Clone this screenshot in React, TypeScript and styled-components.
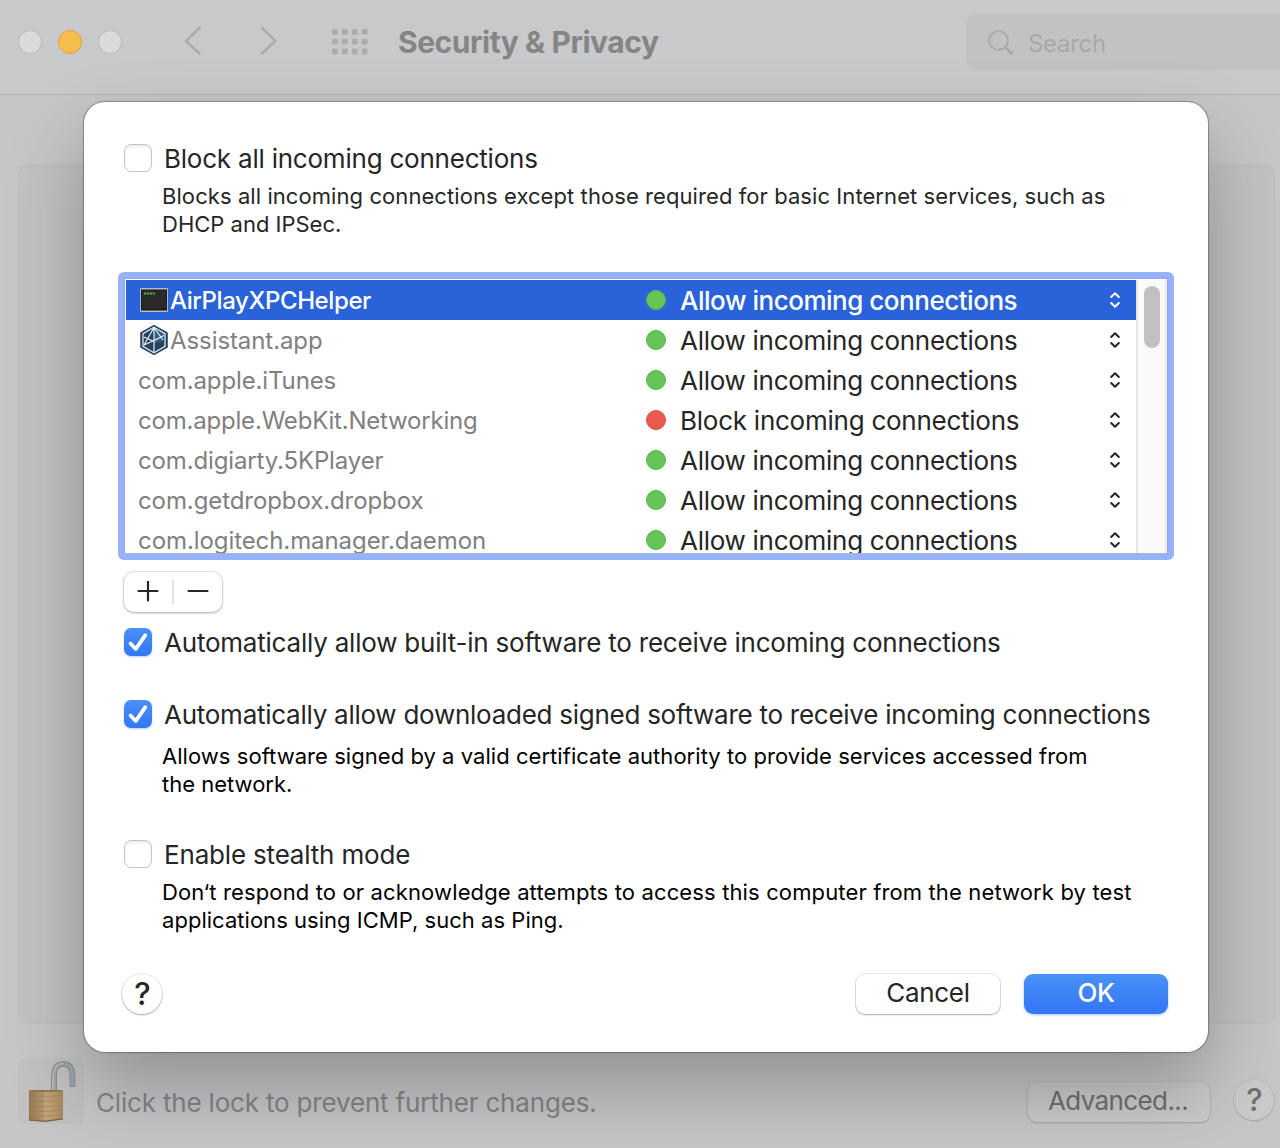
import React, { useState } from 'react';
import styled, { createGlobalStyle, css } from 'styled-components';

const GlobalStyle = createGlobalStyle`
  * { box-sizing: border-box; }
  body {
    margin: 0;
    overflow: hidden;
    font-family: Inter, 'Liberation Sans', sans-serif;
    color: #262626;
  }
  button { font-family: inherit; padding: 0; border: none; }
`;

const Window = styled.div`
  position: relative;
  display: flex;
  flex-direction: column;
  width: 1280px;
  height: 1148px;
  overflow: hidden;
  background: #c6c6c8;
`;

const Toolbar = styled.header`
  display: flex;
  align-items: center;
  height: 95px;
  padding: 0 0 10px 18px;
  background: #c8c9cb;
  border-bottom: 1px solid #b3b4b6;
`;

const Lights = styled.div`
  display: flex;
  gap: 16px;
`;

const Light = styled.span<{ $on?: boolean }>`
  width: 24px;
  height: 24px;
  border-radius: 50%;
  background: ${props => (props.$on ? '#f5bf4f' : '#d9dadc')};
  border: 1px solid ${props => (props.$on ? '#dfa33a' : '#b9babc')};
`;

const NavButtons = styled.div`
  display: flex;
  gap: 54px;
  margin: -2px 0 0 62px;
  color: #abacae;
`;

const GridIcon = styled.svg`
  margin-left: 54px;
  fill: #abacae;
`;

const Title = styled.h1`
  margin: 0 0 1px 30px;
  width: 568px;
  font-size: 30px;
  line-height: 36px;
  font-weight: 700;
  letter-spacing: -0.46px;
  color: #858586;
  white-space: nowrap;
`;

const SearchBox = styled.div`
  display: flex;
  align-items: center;
  flex: 1;
  height: 56px;
  padding-left: 21px;
  gap: 13px;
  border-radius: 10px 0 0 10px;
  background: #c2c2c3;
  color: #a9a9aa;
  font-size: 24px;
  letter-spacing: -0.3px;

  span { padding-top: 2px; }
`;

const Pane = styled.main`
  height: 860px;
  margin: 69px 5px 0 18px;
  border-radius: 10px;
  background: #c0c2c3;
  border: 1px solid #bcbec0;
`;

const StatusBar = styled.footer`
  display: flex;
  align-items: flex-start;
  padding: 34px 6px 0 18px;
`;

const LockTile = styled.div`
  width: 66px;
  height: 66px;
  border-radius: 8px;
  background: rgba(188, 187, 185, 0.5);
`;

const LockText = styled.span`
  flex: 1;
  padding: 29px 0 0 12px;
  font-size: 26px;
  line-height: 32px;
  letter-spacing: -0.18px;
  color: #858587;
`;

const buttonFace = css`
  height: 40px;
  background: #fff;
  box-shadow: 0 0 0 1px rgba(0, 0, 0, 0.08), 0 1px 2px rgba(0, 0, 0, 0.28);
  color: #262626;
`;

const dimmedFace = css`
  background: rgba(205, 205, 205, 0.55);
  box-shadow: 0 0 0 1px rgba(0, 0, 0, 0.05), 0 1px 2px rgba(0, 0, 0, 0.15);
  color: #6f6f70;
`;

const PushButton = styled.button<{ $width: number; $dimmed?: boolean; $primary?: boolean; $track?: number }>`
  ${buttonFace}
  width: ${props => props.$width}px;
  border-radius: 9px;
  font-size: 26px;
  line-height: 38px;
  padding: 0 0 2px;
  letter-spacing: ${props => props.$track || 0}px;
  ${props => props.$dimmed && dimmedFace}
  ${props => props.$dimmed && 'padding-right: 2px;'}
  ${props => props.$primary && css`
    background: linear-gradient(#4a90f8, #3376f5);
    box-shadow: 0 1px 3px rgba(51, 118, 245, 0.4);
    color: #fff;
    font-weight: 500;
  `}
`;

const HelpButton = styled.button<{ $dimmed?: boolean }>`
  ${buttonFace}
  width: 40px;
  border-radius: 50%;
  font-size: 31px;
  line-height: 40px;
  font-weight: 500;
  padding-left: 1px;
  ${props => props.$dimmed && dimmedFace}
`;

const StatusActions = styled.div`
  display: flex;
  align-items: flex-start;
  gap: 24px;
  padding-top: 24px;

  ${HelpButton} { margin-top: -2px; }
`;

// The sheet floats above the dimmed preferences window
const Sheet = styled.section`
  position: absolute;
  top: 102px;
  left: 84px;
  width: 1124px;
  height: 950px;
  padding: 42px 40px 0;
  border-radius: 21px;
  background: #fff;
  box-shadow: 0 0 1px 1px rgba(0, 0, 0, 0.3), 0 36px 76px rgba(0, 0, 0, 0.27);
`;

const OptionRow = styled.label<{ $gap?: number }>`
  display: flex;
  align-items: center;
  gap: 12px;
  height: 28px;
  margin-top: ${props => props.$gap || 0}px;
`;

const Box = styled.span<{ $checked: boolean }>`
  display: flex;
  flex: none;
  width: 28px;
  height: 28px;
  border-radius: 7px;
  background: #fff;
  border: 1px solid #c4c4c4;
  box-shadow: inset 0 2px 2px rgba(0, 0, 0, 0.08);
  ${props => props.$checked && css`
    border: none;
    background: linear-gradient(#4a90f8, #3376f5);
    box-shadow: 0 1px 2px rgba(51, 118, 245, 0.35);
  `}
`;

const OptionText = styled.span<{ $track: number }>`
  padding-top: 2px;
  font-size: 26px;
  line-height: 30px;
  white-space: nowrap;
  letter-spacing: ${props => props.$track}px;
`;

const Note = styled.p<{ $gap: number; $dark?: boolean }>`
  margin: ${props => props.$gap}px 0 0 38px;
  font-size: 22px;
  line-height: 28px;
  color: ${props => (props.$dark ? '#000' : '#262626')};
`;

const NoteLine = styled.span<{ $track: number }>`
  display: block;
  white-space: nowrap;
  letter-spacing: ${props => props.$track}px;
`;

const FocusRing = styled.div`
  width: 1056px;
  height: 288px;
  margin: 34px 0 0 -6px;
  padding: 6px;
  border-radius: 6px;
  background: #97b2f8;
`;

const ListFrame = styled.div`
  display: flex;
  height: 276px;
  border: 1px solid #8ea8ea;
  border-bottom-color: #a9b4cf;
  background: #fff;
  padding: 1px 0 0 1px;
  overflow: hidden;
`;

const Rows = styled.div`
  flex: 1;
  height: 273px;
  overflow: hidden;
`;

const AppRow = styled.div<{ $selected: boolean }>`
  display: flex;
  align-items: center;
  height: 40px;
  padding: 0 14px 0 12px;
  background: ${props => (props.$selected ? '#2962d9' : '#fff')};
  color: ${props => (props.$selected ? '#fff' : '#262626')};
`;

const AppName = styled.div<{ $selected: boolean; $track: number }>`
  display: flex;
  align-items: center;
  width: 508px;
  font-size: 24px;
  line-height: 40px;
  padding-top: 1px;
  letter-spacing: ${props => props.$track}px;
  font-weight: ${props => (props.$selected ? 500 : 400)};
  color: ${props => (props.$selected ? '#fff' : '#808080')};

  svg { margin: -2px 1px 0 1px; flex: none; }
`;

const Dot = styled.span<{ $blocked: boolean }>`
  width: 20px;
  height: 20px;
  border-radius: 50%;
  background: ${props => (props.$blocked ? '#eb5a4c' : '#62c655')};
  border: 1px solid ${props => (props.$blocked ? '#d94f43' : '#58b64b')};
`;

const Policy = styled.span<{ $selected: boolean; $track: number }>`
  flex: 1;
  padding: 1px 0 0 14px;
  font-size: 26px;
  line-height: 38px;
  font-weight: ${props => (props.$selected ? 500 : 400)};
  letter-spacing: ${props => props.$track}px;
`;

const ScrollTrack = styled.div`
  width: 31px;
  height: 273px;
  padding: 6px 0 0 6px;
  background: #fafafa;
  border-left: 2px solid #e8e8e8;
  border-right: 2px solid #ededed;
`;

const ScrollThumb = styled.div`
  width: 16px;
  height: 62px;
  border-radius: 8px;
  background: #c1c1c1;
`;

const Stepper = styled.div`
  display: flex;
  align-items: center;
  width: 98px;
  height: 40px;
  margin-top: 12px;
  border-radius: 10px;
  background: #fff;
  box-shadow: 0 0 0 1px rgba(0, 0, 0, 0.08), 0 1px 3px rgba(0, 0, 0, 0.28);
`;

const StepButton = styled.button`
  display: flex;
  justify-content: center;
  align-items: center;
  flex: 1;
  height: 40px;
  background: none;
`;

const Divider = styled.span`
  width: 2px;
  height: 24px;
  background: #e2e2e2;
`;

const SheetFooter = styled.div`
  display: flex;
  align-items: center;
  gap: 24px;
  margin: 40px 0 0 -2px;

  ${HelpButton} { margin-right: auto; }
`;

const Chevron = ({ flip }: { flip?: boolean }) => (
  <svg width="20" height="30" viewBox="0 0 20 30" fill="none" stroke="currentColor" strokeWidth="2.6" strokeLinecap="round" strokeLinejoin="round">
    <path d={flip ? 'M4 2 L17.500 15 L4 27.500' : 'M15.500 2 L2 15 L15.500 27.500'} />
  </svg>
);

const AppsGrid = () => (
  <GridIcon width="36" height="26" viewBox="0 0 36 26">
    {[0, 9.8, 19.6].map(y =>
      [0, 9.9, 19.8, 29.7].map(x => <rect key={`${x}-${y}`} x={x} y={y} width="5.8" height="5.8" rx="1.2" />)
    )}
  </GridIcon>
);

const SearchIcon = () => (
  <svg width="28" height="28" viewBox="0 0 28 28" fill="none" stroke="currentColor" strokeLinecap="round">
    <circle cx="11.500" cy="12.500" r="9.400" strokeWidth="1.900" />
    <path d="M18.500 19.500 L24.500 25.500" strokeWidth="2.800" />
  </svg>
);

const Tick = () => (
  <svg width="28" height="28" viewBox="0 0 28 28" fill="none" stroke="#fff" strokeWidth="3.800" strokeLinecap="round" strokeLinejoin="round">
    <path d="M6.500 15.500 L11.800 21 L21.300 7.200" />
  </svg>
);

const UpDown = () => (
  <svg width="14" height="18" viewBox="0 0 14 18" fill="none" stroke="currentColor" strokeWidth="2" strokeLinecap="round" strokeLinejoin="round">
    <path d="M3.200 6 L7 2.300 L10.800 6 M3.200 12 L7 15.700 L10.800 12" />
  </svg>
);

const TerminalIcon = () => (
  <svg width="30" height="26" viewBox="0 0 30 26">
    <rect x="1" y="1" width="28" height="24" rx="1" fill="#b4bac2" />
    <rect x="2" y="2.500" width="26" height="21" fill="#1a1a1a" />
    <rect x="3" y="3.500" width="24" height="18.500" fill="#2a2a2a" />
    <path d="M5 6.500 H16" stroke="#4caf50" strokeWidth="2" strokeDasharray="2.200 0.700" />
  </svg>
);

const AssistantIcon = () => (
  <svg width="30" height="32" viewBox="0 0 30 32">
    <path d="M15 0.800 L28.800 8.500 V23.500 L15 31.200 L1.200 23.500 V8.500 Z" fill="#26425f" />
    <path d="M15 3.500 L25.500 9.500 L24 17 L15 20 Z" fill="#2f5f86" />
    <path d="M15 3.300 L26 9.700 V22.300 L15 28.700 L4 22.300 V9.700 Z" fill="none" stroke="#dfe6ec" strokeWidth="1.300" />
    <path
      d="M15 3.500 V28.500 M15 3.500 L5 21 M15 3.500 L24 16 M5 13 L14 17 L25 11.500 M5 21 L14 17"
      fill="none" stroke="#e9eef2" strokeWidth="1.200"
    />
  </svg>
);

const OpenLock = () => (
  <svg width="66" height="66" viewBox="0 0 66 66">
    <defs>
      <linearGradient id="wood" x1="0" x2="1">
        <stop offset="0" stopColor="#947852" />
        <stop offset="0.440" stopColor="#b3966c" />
        <stop offset="0.460" stopColor="#c5a678" />
        <stop offset="1" stopColor="#a98a61" />
      </linearGradient>
    </defs>
    <path d="M36 33 V19 C36 9 39.500 6 45.500 6 C51.500 6 54.500 10 54.500 19 V29" fill="none" stroke="#7d8488" strokeWidth="5.600" />
    <path d="M36 33 V19 C36 9 39.500 6 45.500 6 C51.500 6 54.500 10 54.500 19 V28.200" fill="none" stroke="#a0a7a9" strokeWidth="4" />
    <path d="M35 33 V19 C35.500 9.500 39 5.600 45 5.300" fill="none" stroke="#b8bec0" strokeWidth="1.300" />
    <path d="M12 32 H44 L45 33.500 V61 L27 63.500 L11 62.500 V33.500 Z" fill="url(#wood)" />
    <path d="M12 32 H44 L45 33.500 L27 34.200 L11 33.500 Z" fill="#94774f" />
    <path
      d="M11 38 L27 38.500 L45 37.500 M11 43 L27 43.500 L45 42.300 M11 48 L27 48.500 L45 47.300 M11 53 L27 53.500 L45 52 M11 58 L27 58.500 L45 56.800"
      fill="none" stroke="#8b6f49" strokeOpacity="0.350" strokeWidth="1"
    />
    <path d="M11 62 L27 63.300 L45 60.800" fill="none" stroke="#80624b" strokeWidth="1.200" />
  </svg>
);

const apps = [
  { name: 'AirPlayXPCHelper', track: -0.4, icon: <TerminalIcon /> },
  { name: 'Assistant.app', track: -0.08, icon: <AssistantIcon /> },
  { name: 'com.apple.iTunes', track: -0.13 },
  { name: 'com.apple.WebKit.Networking', track: -0.2, blocked: true },
  { name: 'com.digiarty.5KPlayer', track: -0.14 },
  { name: 'com.getdropbox.dropbox', track: -0.09 },
  { name: 'com.logitech.manager.daemon', track: -0.08 },
];

const App: React.FC = () => {
  const [selected, setSelected] = useState(0);

  return (
    <>
      <GlobalStyle />
      <Window>
        <Toolbar>
          <Lights>
            <Light />
            <Light $on />
            <Light />
          </Lights>
          <NavButtons>
            <Chevron />
            <Chevron flip />
          </NavButtons>
          <AppsGrid />
          <Title>Security &amp; Privacy</Title>
          <SearchBox><SearchIcon /><span>Search</span></SearchBox>
        </Toolbar>
        <Pane />
        <StatusBar>
          <LockTile><OpenLock /></LockTile>
          <LockText>Click the lock to prevent further changes.</LockText>
          <StatusActions>
            <PushButton $width={182} $dimmed $track={-0.6}>Advanced...</PushButton>
            <HelpButton $dimmed>?</HelpButton>
          </StatusActions>
        </StatusBar>

        <Sheet>
          <OptionRow>
            <Box $checked={false} />
            <OptionText $track={-0.22}>Block all incoming connections</OptionText>
          </OptionRow>
          <Note $gap={10}>
            <NoteLine $track={0.075}>Blocks all incoming connections except those required for basic Internet services, such as</NoteLine>
            <NoteLine $track={0}>DHCP and IPSec.</NoteLine>
          </Note>

          <FocusRing>
            <ListFrame>
              <Rows>
                {apps.map((app, i) => (
                  <AppRow key={app.name} $selected={i === selected} onClick={() => setSelected(i)}>
                    <AppName $selected={i === selected} $track={app.track}>{app.icon}{app.name}</AppName>
                    <Dot $blocked={!!app.blocked} />
                    <Policy $selected={i === selected} $track={i === selected ? -0.48 : app.blocked ? -0.25 : -0.28}>
                      {app.blocked ? 'Block' : 'Allow'} incoming connections
                    </Policy>
                    <UpDown />
                  </AppRow>
                ))}
              </Rows>
              <ScrollTrack><ScrollThumb /></ScrollTrack>
            </ListFrame>
          </FocusRing>

          <Stepper>
            <StepButton>
              <svg width="22" height="22" viewBox="0 0 22 22" stroke="#262626" strokeWidth="2.200" strokeLinecap="round">
                <path d="M1.500 10 H20.500 M11 0.800 V19.500" />
              </svg>
            </StepButton>
            <Divider />
            <StepButton>
              <svg width="22" height="22" viewBox="0 0 22 22" stroke="#262626" strokeWidth="2.200" strokeLinecap="round">
                <path d="M1.500 10 H20.500" />
              </svg>
            </StepButton>
          </Stepper>

          <OptionRow $gap={16}>
            <Box $checked><Tick /></Box>
            <OptionText $track={-0.215}>Automatically allow built-in software to receive incoming connections</OptionText>
          </OptionRow>
          <OptionRow $gap={44}>
            <Box $checked><Tick /></Box>
            <OptionText $track={-0.26}>Automatically allow downloaded signed software to receive incoming connections</OptionText>
          </OptionRow>
          <Note $gap={14} $dark>
            <NoteLine $track={0.045}>Allows software signed by a valid certificate authority to provide services accessed from</NoteLine>
            <NoteLine $track={0}>the network.</NoteLine>
          </Note>
          <OptionRow $gap={42}>
            <Box $checked={false} />
            <OptionText $track={-0.18}>Enable stealth mode</OptionText>
          </OptionRow>
          <Note $gap={10} $dark>
            <NoteLine $track={0.135}>Don‘t respond to or acknowledge attempts to access this computer from the network by test</NoteLine>
            <NoteLine $track={0.03}>applications using ICMP, such as Ping.</NoteLine>
          </Note>

          <SheetFooter>
            <HelpButton>?</HelpButton>
            <PushButton $width={144} $track={-0.3}>Cancel</PushButton>
            <PushButton $width={144} $primary $track={-0.3}>OK</PushButton>
          </SheetFooter>
        </Sheet>
      </Window>
    </>
  );
};

export default App;
